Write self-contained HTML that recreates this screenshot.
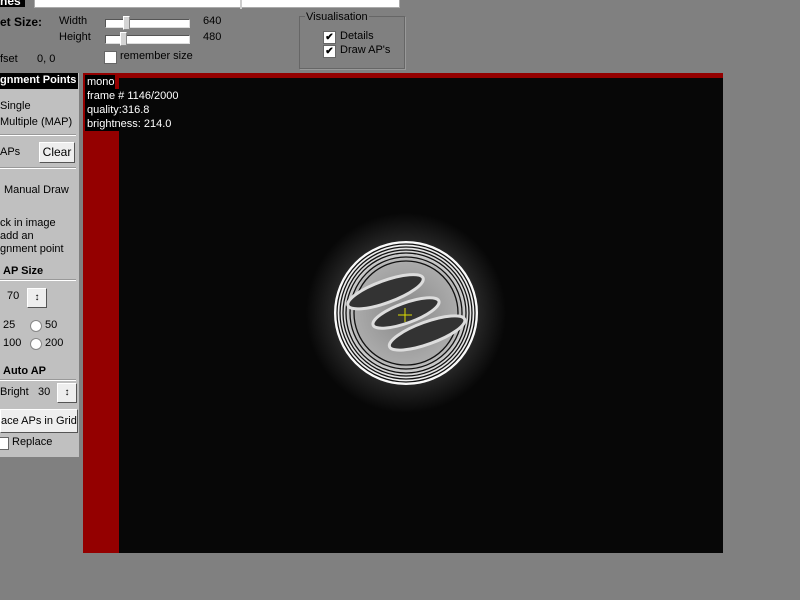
<!DOCTYPE html>
<html><head><style>
body{margin:0;width:800px;height:600px;background:#808080;position:relative;overflow:hidden;font-family:"Liberation Sans",Tahoma,sans-serif;font-size:11px;color:#000}
.a{position:absolute;white-space:nowrap}
.f{font-size:11px}
.slider{position:absolute;height:7px;background:#fff;border:1px solid #555;border-right-color:#ddd;border-bottom-color:#ddd}
.thumb{position:absolute;width:5px;height:12px;background:#d4d4d4;border:1px solid #888;border-top-color:#fff;border-left-color:#fff;top:-4px}
.cb{position:absolute;width:11px;height:11px;background:#fff;border:1px solid #666;font-size:10px;line-height:11px;text-align:center;font-weight:bold}
.btn{position:absolute;background:#eee;border:1px solid #fff;border-right-color:#555;border-bottom-color:#555;text-align:center;font-size:11px;white-space:nowrap;overflow:hidden}
.sep{position:absolute;height:1px;background:#999;border-bottom:1px solid #fff}
.rad{position:absolute;width:10px;height:10px;border-radius:50%;background:#fff;border:1px solid #888}
.b{font-weight:bold}
</style></head><body>
<div class="a" style="left:0;top:-6px;width:25px;height:13px;background:#000;color:#fff;font-weight:bold;font-size:12px">nes</div>
<div class="a" style="left:34px;top:0;width:364px;height:7px;background:#fff;border:1px solid #aaa;border-top:none"></div>
<div class="a" style="left:240px;top:0;width:2px;height:9px;background:#ccc"></div>
<div class="a b" style="left:0;top:15px;font-size:12px">et Size:</div>
<div class="a f" style="left:59px;top:15px">Width</div>
<div class="a f" style="left:59px;top:31px">Height</div>
<div class="slider" style="left:105px;top:19px;width:83px"><div class="thumb" style="left:17px"></div></div>
<div class="slider" style="left:105px;top:35px;width:83px"><div class="thumb" style="left:14px"></div></div>
<div class="a f" style="left:203px;top:15px">640</div>
<div class="a f" style="left:203px;top:31px">480</div>
<div class="a f" style="left:0;top:53px">fset</div>
<div class="a f" style="left:37px;top:53px">0, 0</div>
<div class="cb" style="left:104px;top:51px"></div>
<div class="a f" style="left:120px;top:50px">remember size</div>
<div class="a" style="left:299px;top:16px;width:104px;height:51px;border:1px solid #666;box-shadow:1px 1px 0 #999"></div>
<div class="a f" style="left:305px;top:11px;background:#808080;padding:0 1px">Visualisation</div>
<div class="cb" style="left:323px;top:31px">✔</div>
<div class="cb" style="left:323px;top:45px">✔</div>
<div class="a f" style="left:340px;top:30px">Details</div>
<div class="a f" style="left:340px;top:44px">Draw AP's</div>

<div class="a" style="left:0;top:73px;width:79px;height:384px;background:#c0c0c0"></div>
<div class="a b" style="left:0;top:73px;width:78px;height:16px;background:#000;color:#fff;font-size:11px;line-height:15px;overflow:hidden">gnment Points</div>
<div class="a f" style="left:0;top:100px">Single</div>
<div class="a f" style="left:0;top:116px">Multiple (MAP)</div>
<div class="sep" style="left:0;top:134px;width:76px"></div>
<div class="a f" style="left:0;top:146px">APs</div>
<div class="btn" style="left:39px;top:142px;width:34px;height:19px;line-height:19px;font-size:12px">Clear</div>
<div class="sep" style="left:0;top:167px;width:76px"></div>
<div class="a f" style="left:4px;top:184px">Manual Draw</div>
<div class="a f" style="left:0;top:217px;line-height:13px">ck in image<br>add an<br>gnment point</div>
<div class="a b f" style="left:3px;top:265px">AP Size</div>
<div class="sep" style="left:0;top:279px;width:76px"></div>
<div class="a f" style="left:7px;top:290px">70</div>
<div class="btn" style="left:27px;top:288px;width:18px;height:18px;font-size:10px;line-height:18px">↕</div>
<div class="a f" style="left:3px;top:319px">25</div>
<div class="rad" style="left:30px;top:320px"></div>
<div class="a f" style="left:45px;top:319px">50</div>
<div class="a f" style="left:3px;top:337px">100</div>
<div class="rad" style="left:30px;top:338px"></div>
<div class="a f" style="left:45px;top:337px">200</div>
<div class="a b f" style="left:3px;top:365px">Auto AP</div>
<div class="sep" style="left:0;top:379px;width:76px"></div>
<div class="a f" style="left:0;top:386px">Bright</div>
<div class="a f" style="left:38px;top:386px">30</div>
<div class="btn" style="left:57px;top:383px;width:18px;height:18px;font-size:10px;line-height:18px">↕</div>
<div class="btn" style="left:0;top:409px;width:76px;height:22px;line-height:22px;text-align:right;padding-right:0">ace APs in Grid&nbsp;</div>
<div class="cb" style="left:-3px;top:437px;width:10px"></div>
<div class="a f" style="left:12px;top:436px">Replace</div>

<div class="a" style="left:83px;top:73px;width:640px;height:480px;background:#940000"></div>
<div class="a" style="left:119px;top:78px;width:604px;height:475px;background:#070707"></div>
<div class="a" style="left:85px;top:75px;width:30px;height:14px;background:#000"></div>
<div class="a" style="left:85px;top:89px;width:34px;height:42px;background:#000"></div>
<div class="a" style="left:87px;top:75px;color:#fff;line-height:14px;font-size:11px">mono<br>frame # 1146/2000<br>quality:316.8<br>brightness: 214.0</div>
<svg class="a" style="left:119px;top:78px" width="604" height="475">
<defs>
<radialGradient id="g" cx="287" cy="235" r="100" gradientUnits="userSpaceOnUse">
<stop offset="0.6" stop-color="#333"/><stop offset="1" stop-color="#070707"/></radialGradient>
<radialGradient id="p" cx="287" cy="235" r="72" gradientUnits="userSpaceOnUse">
<stop offset="0" stop-color="#888"/><stop offset="0.7" stop-color="#aaa"/><stop offset="1" stop-color="#fff"/></radialGradient>
</defs>
<circle cx="287" cy="235" r="100" fill="url(#g)"/>
<circle cx="287" cy="235" r="72" fill="url(#p)"/>
<g fill="none" stroke="#111" stroke-width="1.3">
<circle cx="287" cy="235" r="69"/><circle cx="287" cy="235" r="66"/><circle cx="287" cy="235" r="63"/><circle cx="287" cy="235" r="60"/><circle cx="287" cy="235" r="56"/><circle cx="287" cy="235" r="52"/>
</g>
<g transform="rotate(-20 287 235)" fill="#333" stroke="#ddd" stroke-width="3">
<ellipse cx="275" cy="208" rx="40" ry="11"/>
<ellipse cx="287" cy="235" rx="35" ry="10"/>
<ellipse cx="300" cy="261" rx="40" ry="11"/>
</g>
<path d="M279 237h14M286 230v14" stroke="#dd0" stroke-width="1"/>
</svg>
</body></html>
